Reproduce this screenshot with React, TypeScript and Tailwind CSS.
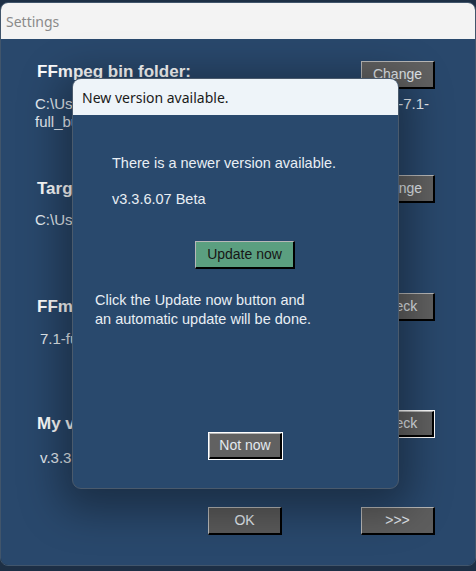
import React from "react";

const sans = "font-['Liberation_Sans','Arial',sans-serif]";
const ui = "font-['Noto_Sans','Segoe_UI',sans-serif]";

// classic 3D win-forms button
function WinButton({
  children,
  focused = false,
  className = "",
  face = "bg-[#616161] text-[#e3e9ef]",
}: {
  children: React.ReactNode;
  focused?: boolean;
  className?: string;
  face?: string;
}) {
  const inner = `flex h-full w-full items-center justify-center border-t border-l border-t-[#b8b8b8] border-l-[#b8b8b8] border-r-2 border-b-2 border-r-black border-b-black text-[14px] ${face}`;
  return (
    <div
      className={`${sans} h-[28px] w-[74px] shrink-0 ${
        focused ? "border border-white" : ""
      } ${className}`}
    >
      <div className={inner}>{children}</div>
    </div>
  );
}

function Section({
  title,
  button,
  titleTop,
  pathGap,
  pathIndent,
  height,
  focused,
  children,
}: {
  title: string;
  button: string;
  titleTop: string;
  pathGap: string;
  pathIndent: string;
  height: string;
  focused?: boolean;
  children: React.ReactNode;
}) {
  return (
    <div className={`flex justify-between ${height}`}>
      <div className="flex min-w-0 flex-1 flex-col">
        <div
          className={`${titleTop} ml-[2px] text-[17px] font-bold leading-[20px] text-white`}
        >
          {title}
        </div>
        <div
          className={`${pathGap} ${pathIndent} text-[15px] leading-[18px] text-[#e8eef4] whitespace-nowrap`}
        >
          {children}
        </div>
      </div>
      <WinButton focused={focused}>{button}</WinButton>
    </div>
  );
}

export default function App() {
  return (
    <div className={`relative h-[571px] w-[476px] overflow-hidden bg-[#1d2f45] ${sans}`}>
      {/* Settings window */}
      <div className="mt-[2px] flex h-[564px] flex-col overflow-hidden rounded-[8px] border border-[#41556b]">
        <div className={`${ui} flex h-[36px] items-center bg-[#f3f3f3] px-[5px] text-[14px] text-[#8a8a8a]`}>
          Settings
        </div>
        <div className="flex-1 bg-[#29486c] pl-[34px] pr-[40px] pt-[22px]">
          <Section
            title="FFmpeg bin folder:"
            button="Change"
            titleTop="mt-[1px]"
            pathGap="mt-[13px]"
            pathIndent="ml-0"
            height="h-[114px]"
          >
            C:\Users\Gebruiker\Documents\Downloads\FFt\ffmpeg-7.1-
            <br />
            full_build\bin
          </Section>
          <Section
            title="Target folder:"
            button="Change"
            titleTop="mt-[4px]"
            pathGap="mt-[12px]"
            pathIndent="ml-0"
            height="h-[118px]"
          >
            C:\Users\Gebruiker\Videos
          </Section>
          <Section
            title="FFmpeg version:"
            button="Check"
            titleTop="mt-[4px]"
            pathGap="mt-[13px]"
            pathIndent="ml-[5px]"
            height="h-[117px]"
          >
            7.1-full_build-www.gyan.dev
          </Section>
          <Section
            title="My version:"
            button="Check"
            titleTop="mt-[4px]"
            pathGap="mt-[15px]"
            pathIndent="ml-[5px]"
            height="h-[97px]"
            focused
          >
            v.3.3.6.06 Beta
          </Section>
          <div className="flex justify-end gap-[79px]">
            <WinButton face="bg-[#5a5a5a] text-[#e3e9ef]">OK</WinButton>
            <WinButton face="bg-[#5e5e5e] text-[#e3e9ef]">&gt;&gt;&gt;</WinButton>
          </div>
        </div>
      </div>

      {/* Update dialog */}
      <div className="absolute left-[72px] top-[78px] flex h-[411px] w-[327px] flex-col overflow-hidden rounded-[9px] border border-[#4a5a6c] bg-[#29496d] shadow-[0_10px_40px_12px_rgba(0,0,0,0.35)]">
        <div className={`${ui} flex h-[36px] shrink-0 items-center bg-[#eef4f9] px-[9px] text-[14px] text-[#1a1a1a]`}>
          New version available.
        </div>
        <div className="flex flex-1 flex-col text-[14.5px] leading-[17px] text-[#e8eef4]">
          <div className="ml-[39px] mt-[40px]">There is a newer version available.</div>
          <div className="ml-[39px] mt-[19px]">v3.3.6.07 Beta</div>
          <WinButton
            className="ml-[122px] mt-[33px] w-[100px]"
            face="bg-[#5b9f80] text-[#161616]"
          >
            Update now
          </WinButton>
          <div className="ml-[22px] mt-[22px] leading-[18.5px]">
            Click the Update now button and
            <br />
            an automatic update will be done.
          </div>
          <WinButton focused className="ml-[135px] mt-[104px] w-[75px]">
            Not now
          </WinButton>
        </div>
      </div>
    </div>
  );
}
